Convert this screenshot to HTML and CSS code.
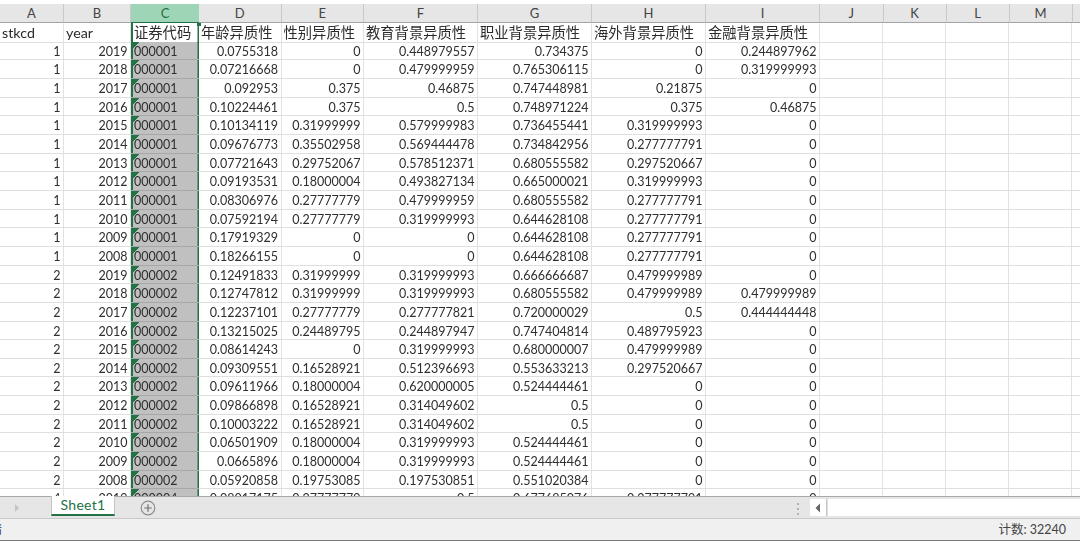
FILE: index.html
```html
<!DOCTYPE html>
<html lang="en">
<head>
    <meta charset="UTF-8">
    <title>Sheet1 - Excel</title>
    <link rel="stylesheet" href="styles.css">
</head>
<body>
    <div class="top-gap"></div>

    <div class="row col-head">
        <span>A</span><span>B</span><span class="active">C</span><span>D</span><span>E</span><span>F</span><span>G</span><span>H</span><span>I</span><span>J</span><span>K</span><span>L</span><span>M</span><span></span>
    </div>

    <div class="grid">
        <div class="row title">
            <span>stkcd</span><span>year</span><span class="code-title">证券代码</span><span>年龄异质性</span><span>性别异质性</span><span>教育背景异质性</span><span>职业背景异质性</span><span>海外背景异质性</span><span>金融背景异质性</span><span class="rest"></span>
        </div>
        <div class="row"><span>1</span><span>2019</span><span class="code">000001</span><span>0.0755318</span><span>0</span><span>0.448979557</span><span>0.734375</span><span>0</span><span>0.244897962</span><span class="rest"></span></div>
        <div class="row"><span>1</span><span>2018</span><span class="code">000001</span><span>0.07216668</span><span>0</span><span>0.479999959</span><span>0.765306115</span><span>0</span><span>0.319999993</span><span class="rest"></span></div>
        <div class="row"><span>1</span><span>2017</span><span class="code">000001</span><span>0.092953</span><span>0.375</span><span>0.46875</span><span>0.747448981</span><span>0.21875</span><span>0</span><span class="rest"></span></div>
        <div class="row"><span>1</span><span>2016</span><span class="code">000001</span><span>0.10224461</span><span>0.375</span><span>0.5</span><span>0.748971224</span><span>0.375</span><span>0.46875</span><span class="rest"></span></div>
        <div class="row"><span>1</span><span>2015</span><span class="code">000001</span><span>0.10134119</span><span>0.31999999</span><span>0.579999983</span><span>0.736455441</span><span>0.319999993</span><span>0</span><span class="rest"></span></div>
        <div class="row"><span>1</span><span>2014</span><span class="code">000001</span><span>0.09676773</span><span>0.35502958</span><span>0.569444478</span><span>0.734842956</span><span>0.277777791</span><span>0</span><span class="rest"></span></div>
        <div class="row"><span>1</span><span>2013</span><span class="code">000001</span><span>0.07721643</span><span>0.29752067</span><span>0.578512371</span><span>0.680555582</span><span>0.297520667</span><span>0</span><span class="rest"></span></div>
        <div class="row"><span>1</span><span>2012</span><span class="code">000001</span><span>0.09193531</span><span>0.18000004</span><span>0.493827134</span><span>0.665000021</span><span>0.319999993</span><span>0</span><span class="rest"></span></div>
        <div class="row"><span>1</span><span>2011</span><span class="code">000001</span><span>0.08306976</span><span>0.27777779</span><span>0.479999959</span><span>0.680555582</span><span>0.277777791</span><span>0</span><span class="rest"></span></div>
        <div class="row"><span>1</span><span>2010</span><span class="code">000001</span><span>0.07592194</span><span>0.27777779</span><span>0.319999993</span><span>0.644628108</span><span>0.277777791</span><span>0</span><span class="rest"></span></div>
        <div class="row"><span>1</span><span>2009</span><span class="code">000001</span><span>0.17919329</span><span>0</span><span>0</span><span>0.644628108</span><span>0.277777791</span><span>0</span><span class="rest"></span></div>
        <div class="row"><span>1</span><span>2008</span><span class="code">000001</span><span>0.18266155</span><span>0</span><span>0</span><span>0.644628108</span><span>0.277777791</span><span>0</span><span class="rest"></span></div>
        <div class="row"><span>2</span><span>2019</span><span class="code">000002</span><span>0.12491833</span><span>0.31999999</span><span>0.319999993</span><span>0.666666687</span><span>0.479999989</span><span>0</span><span class="rest"></span></div>
        <div class="row"><span>2</span><span>2018</span><span class="code">000002</span><span>0.12747812</span><span>0.31999999</span><span>0.319999993</span><span>0.680555582</span><span>0.479999989</span><span>0.479999989</span><span class="rest"></span></div>
        <div class="row"><span>2</span><span>2017</span><span class="code">000002</span><span>0.12237101</span><span>0.27777779</span><span>0.277777821</span><span>0.720000029</span><span>0.5</span><span>0.444444448</span><span class="rest"></span></div>
        <div class="row"><span>2</span><span>2016</span><span class="code">000002</span><span>0.13215025</span><span>0.24489795</span><span>0.244897947</span><span>0.747404814</span><span>0.489795923</span><span>0</span><span class="rest"></span></div>
        <div class="row"><span>2</span><span>2015</span><span class="code">000002</span><span>0.08614243</span><span>0</span><span>0.319999993</span><span>0.680000007</span><span>0.479999989</span><span>0</span><span class="rest"></span></div>
        <div class="row"><span>2</span><span>2014</span><span class="code">000002</span><span>0.09309551</span><span>0.16528921</span><span>0.512396693</span><span>0.553633213</span><span>0.297520667</span><span>0</span><span class="rest"></span></div>
        <div class="row"><span>2</span><span>2013</span><span class="code">000002</span><span>0.09611966</span><span>0.18000004</span><span>0.620000005</span><span>0.524444461</span><span>0</span><span>0</span><span class="rest"></span></div>
        <div class="row"><span>2</span><span>2012</span><span class="code">000002</span><span>0.09866898</span><span>0.16528921</span><span>0.314049602</span><span>0.5</span><span>0</span><span>0</span><span class="rest"></span></div>
        <div class="row"><span>2</span><span>2011</span><span class="code">000002</span><span>0.10003222</span><span>0.16528921</span><span>0.314049602</span><span>0.5</span><span>0</span><span>0</span><span class="rest"></span></div>
        <div class="row"><span>2</span><span>2010</span><span class="code">000002</span><span>0.06501909</span><span>0.18000004</span><span>0.319999993</span><span>0.524444461</span><span>0</span><span>0</span><span class="rest"></span></div>
        <div class="row"><span>2</span><span>2009</span><span class="code">000002</span><span>0.0665896</span><span>0.18000004</span><span>0.319999993</span><span>0.524444461</span><span>0</span><span>0</span><span class="rest"></span></div>
        <div class="row"><span>2</span><span>2008</span><span class="code">000002</span><span>0.05920858</span><span>0.19753085</span><span>0.197530851</span><span>0.551020384</span><span>0</span><span>0</span><span class="rest"></span></div>
        <div class="row"><span>4</span><span>2019</span><span class="code">000004</span><span>0.08017175</span><span>0.27777779</span><span>0.5</span><span>0.677685076</span><span>0.277777791</span><span>0</span><span class="rest"></span></div>
    </div>

    <div class="tabs">
        <svg class="tab-arrow" width="8" height="10" viewBox="0 0 8 10"><path d="M2 1l4 4-4 4z" fill="#c4c4c4"/></svg>
        <div class="tab">Sheet1</div>
        <svg class="add-sheet" width="16" height="16" viewBox="0 0 16 16">
            <circle cx="8" cy="8" r="6.8" fill="none" stroke="#8c8c8c" stroke-width="1.2"/>
            <path d="M8 4.2v7.6M4.2 8h7.6" stroke="#707070" stroke-width="1.2"/>
        </svg>
        <div class="split-dots"><i></i><i></i><i></i></div>
        <div class="scroll-left">
            <svg width="6" height="10" viewBox="0 0 6 10"><path d="M5 0.5v9L0.5 5z" fill="#666"/></svg>
        </div>
        <div class="scroll-track"></div>
    </div>

    <div class="status">
        <span class="ready">就绪</span>
        <span class="count">计数: 32240</span>
    </div>
</body>
</html>
```

FILE: styles.css
```css
* {
    box-sizing: border-box;
}

body {
    margin: 0;
    width: 1080px;
    height: 541px;
    overflow: hidden;
    display: flex;
    flex-direction: column;
    background: #fff;
    color: #2e2e2e;
    font-family: Lato, "Noto Sans CJK SC", sans-serif;
    font-size: 12.5px;
    filter: blur(0.3px);
}

.top-gap {
    height: 4px;
    flex: none;
}

.row {
    display: grid;
    grid-template-columns: 64px 67px 68px 82.5px 82.5px 114px 114px 114px 114px 260px;
    height: 18.66px;
    flex: none;
}

.row span {
    display: block;
    padding: 0 2.5px;
    text-align: right;
    line-height: 20px;
    white-space: nowrap;
    overflow: hidden;
    border-right: 1px solid #e2e2e2;
    border-bottom: 1px solid #dfdfdf;
}

/* column letters */
.col-head {
    grid-template-columns: 64px 67px 68px 82.5px 82.5px 114px 114px 114px 114px 63.5px 63px 63px 63px 8px;
    height: 19px;
    background: #e6e6e6;
    color: #444;
}

.col-head span {
    padding: 0;
    text-align: center;
    font-size: 13px;
    line-height: 19px;
    border-right: 1px solid #c9c9c9;
    border-bottom: 1px solid #a3a3a3;
}

.col-head .active {
    background: #9fd5b7;
    color: #1f6e45;
    border-right: none;
    border-bottom: 1px solid #217346;
}

.grid {
    flex: 1;
    min-height: 0;
    overflow: hidden;
}

.title span {
    text-align: left;
    padding-left: 2px;
    font-size: 14.3px;
    color: #2b2b2b;
}

.title .code-title {
    position: relative;
    overflow: visible;
    padding-left: 3px;
    border-right: none;
    border-bottom: none;
    box-shadow: inset 2px 0 #217346, inset -1.5px 0 #217346;
}

/* fill handle on the selected header */
.code-title::after {
    content: "";
    position: absolute;
    top: -1px;
    right: -2px;
    width: 4px;
    height: 4px;
    background: #217346;
}

.row .code {
    text-align: left;
    padding-left: 3px;
    background: linear-gradient(135deg, #217346 4.4px, transparent 4.4px) 2px 0 no-repeat, #c0c0c0;
    background-size: 8px 8px, auto;
    border-right: none;
    border-bottom: 1px solid #a8a8a8;
    box-shadow: inset 2px 0 #217346, inset -1.5px 0 #217346;
}

.rest {
    border-right: none !important;
    background: repeating-linear-gradient(90deg, transparent 0, transparent 62px, #e2e2e2 62px, #e2e2e2 63px);
}

.tabs {
    height: 22px;
    flex: none;
    display: flex;
    align-items: flex-start;
    background: #e6e6e6;
    border-top: 1px solid #a8a8a8;
}

.tab-arrow {
    margin: 6px 30px 0 13px;
}

.tab {
    width: 64px;
    height: 20px;
    margin-top: -1px;
    background: #fff;
    border: 1px solid #c4c4c4;
    border-top: none;
    border-bottom: 2px solid #217346;
    color: #217346;
    text-align: center;
    font-size: 14px;
    line-height: 17px;
    letter-spacing: 0.3px;
}

.add-sheet {
    margin: 3px 0 0 25px;
}

.split-dots {
    display: flex;
    flex-direction: column;
    gap: 3px;
    margin: 6px 0 0 641px;
}

.split-dots i {
    width: 2px;
    height: 2px;
    background: #b0b0b0;
}

.scroll-left {
    width: 17px;
    height: 17px;
    margin: 2px 0 0 11px;
    display: flex;
    align-items: center;
    justify-content: center;
    background: #fff;
    border-right: 1px solid #c4c4c4;
}

.scroll-track {
    flex: 1;
    height: 17px;
    margin-top: 2px;
    background: #fff;
    border-left: 1px solid #e0e0e0;
}

.status {
    height: 23px;
    flex: none;
    display: flex;
    justify-content: space-between;
    background: #f0f0f0;
    border-top: 1px solid #c9c9c9;
    border-bottom: 1px solid #777;
    overflow: hidden;
    color: #444;
    font-size: 12.5px;
    line-height: 21px;
}

.ready {
    margin-left: -23px;
}

.count {
    margin-right: 14px;
}
```
